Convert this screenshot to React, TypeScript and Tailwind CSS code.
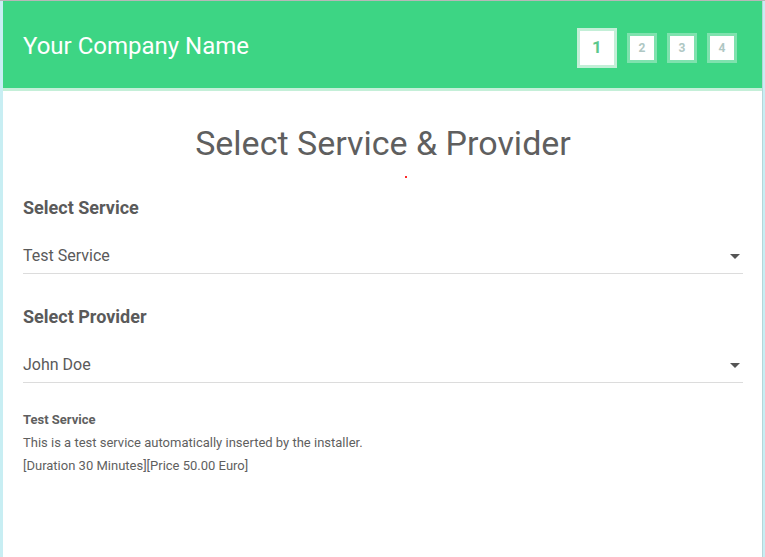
import React from "react";

const steps = [1, 2, 3, 4];

const Caret = () => (
  <svg width="10" height="5" viewBox="0 0 10 5" className="text-[#555]">
    <path d="M0 0h10L5 5z" fill="currentColor" />
  </svg>
);

const SelectField: React.FC<{ label: string; value: string }> = ({ label, value }) => (
  <div className="mt-[18px]">
    <h3 className="text-[18px] font-bold text-[#5a5a5a] leading-[24px]">{label}</h3>
    <div className="mt-[26px] flex items-center justify-between border-b border-[#dcdcdc] pb-[7px] pr-[3px]">
      <span className="text-[16px] text-[#5a5a5a] leading-[20px]">{value}</span>
      <Caret />
    </div>
  </div>
);

export default function App() {
  return (
    <div
      className="w-[765px] h-[557px] bg-[#c8eef3] border-t border-[#b8b8b8] overflow-hidden"
      style={{ fontFamily: "Roboto, 'Liberation Sans', sans-serif" }}
    >
      <div className="ml-[3px] mr-[2px] h-full bg-white border-r border-[#b5d6d9]">
        {/* Header */}
        <div className="h-[87px] bg-[#3dd584] flex items-center justify-between pl-[20px] pr-[25px]">
          <h1 className="text-[24px] text-white leading-none mt-[3px]">Your Company Name</h1>
          <div className="flex items-center gap-[11px] mt-[6px]">
            {steps.map((s) =>
              s === 1 ? (
                <div
                  key={s}
                  className="w-[40px] h-[40px] bg-white border-[3px] border-[#c3efd7] flex items-center justify-center text-[17px] font-bold text-[#5cc88c]"
                >
                  {s}
                </div>
              ) : (
                <div
                  key={s}
                  className="w-[30px] h-[30px] bg-white border-[3px] border-[#7fe2ae] flex items-center justify-center text-[12px] font-bold text-[#aec7c3] -ml-px"
                >
                  {s}
                </div>
              )
            )}
          </div>
        </div>
        <div className="h-[3px] bg-[#c4efd8]" />

        {/* Content */}
        <div className="pl-[20px] pr-[19px]">
          <h2 className="text-center text-[34px] text-[#5f5f5f] leading-none pt-[35px]">
            Select Service &amp; Provider
          </h2>
          <div className="flex justify-center mt-[16px]">
            <div className="w-[2px] h-[2px] bg-[#ff2a2a] ml-[45px]" />
          </div>

          <SelectField label="Select Service" value="Test Service" />
          <div className="mt-[31px]" />
          <SelectField label="Select Provider" value="John Doe" />

          <div className="mt-[25px] text-[13px] text-[#5f5f5f] leading-[23px]">
            <div className="font-bold">Test Service</div>
            <div>This is a test service automatically inserted by the installer.</div>
            <div>[Duration 30 Minutes][Price 50.00 Euro]</div>
          </div>
        </div>
      </div>
    </div>
  );
}
